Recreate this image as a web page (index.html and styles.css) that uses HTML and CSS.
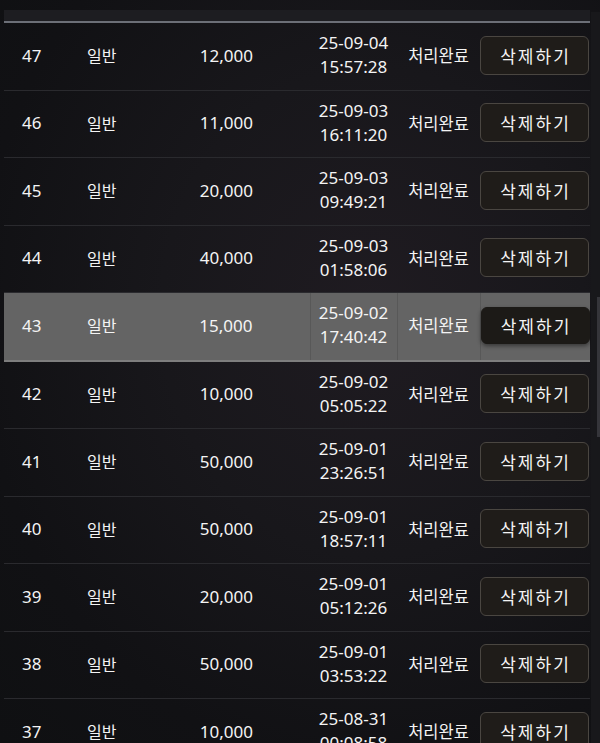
FILE: index.html
```html
<!DOCTYPE html>
<html lang="ko">
<head>
    <meta charset="UTF-8">
    <meta name="viewport" content="width=device-width, initial-scale=1.0">
    <title>충전 내역</title>
    <link rel="stylesheet" href="styles.css">
</head>
<body>

    <div class="page">
        <div class="list">
            <div class="head-bar"></div>
            <table class="history">
                <colgroup>
                    <col class="c-no">
                    <col class="c-type">
                    <col class="c-amount">
                    <col class="c-date">
                    <col class="c-status">
                    <col class="c-action">
                </colgroup>
                <tbody id="rows"></tbody>
            </table>
        </div>
        <div class="scrollbar"><div class="thumb"></div></div>
    </div>

    <script>
        var data = [
            [47, "12,000", "25-09-04", "15:57:28"],
            [46, "11,000", "25-09-03", "16:11:20"],
            [45, "20,000", "25-09-03", "09:49:21"],
            [44, "40,000", "25-09-03", "01:58:06"],
            [43, "15,000", "25-09-02", "17:40:42"],
            [42, "10,000", "25-09-02", "05:05:22"],
            [41, "50,000", "25-09-01", "23:26:51"],
            [40, "50,000", "25-09-01", "18:57:11"],
            [39, "20,000", "25-09-01", "05:12:26"],
            [38, "50,000", "25-09-01", "03:53:22"],
            [37, "10,000", "25-08-31", "00:08:58"]
        ];

        var html = "";
        for (var i = 0; i < data.length; i++) {
            var r = data[i];
            html += '<tr' + (r[0] === 43 ? ' class="active"' : '') + '>';
            html += '<td class="no">' + r[0] + '</td>';
            html += '<td class="type">일반</td>';
            html += '<td class="amount">' + r[1] + '</td>';
            html += '<td class="date">' + r[2] + '<br>' + r[3] + '</td>';
            html += '<td class="status">처리완료</td>';
            html += '<td class="action"><button class="del-btn">삭제하기</button></td>';
            html += '</tr>';
        }
        document.getElementById('rows').innerHTML = html;
    </script>
</body>
</html>
```

FILE: styles.css
```css
html, body {
    height: 100%;
}

body {
    margin: 0;
    overflow: hidden;
    font-family: 'Noto Sans', 'Noto Sans CJK KR', sans-serif;
    color: #f4f4f4;
    background: radial-gradient(ellipse at 62% 42%, #1f1b21 0%, #18171b 40%, #111114 75%, #0f1012 100%);
}

.page {
    display: flex;
    height: 100%;
    padding-top: 10px;
    box-sizing: border-box;
}

.list {
    width: 586px;
    margin-left: 4px;
}

.head-bar {
    height: 11px;
    background-color: #1d1d21;
    border-bottom: 2px solid #6c6f77;
}

.history {
    width: 100%;
    border-collapse: collapse;
    table-layout: fixed;
}

.c-no { width: 66px; }
.c-type { width: 100px; }
.c-amount { width: 140px; }
.c-date { width: 87px; }
.c-status { width: 83px; }
.c-action { width: 110px; }

.history td {
    height: 64.5px;
    padding: 0 0 2px 0;
    border-bottom: 1px solid #2a2a2e;
    vertical-align: middle;
    font-size: 17px;
    white-space: nowrap;
}

.history td.no {
    padding-left: 18px;
}

.history td.type {
    padding-left: 17px;
    font-size: 16px;
}

.history td.amount {
    text-align: right;
    padding-right: 57px;
}

.history td.date {
    text-align: center;
    line-height: 24px;
}

.history td.status {
    text-align: center;
    font-size: 16.5px;
}

.history td.action {
    text-align: right;
    padding-right: 1px;
}

.del-btn {
    width: 109px;
    height: 39px;
    padding: 0 0 0 2px;
    font-family: 'Noto Sans CJK KR', sans-serif;
    font-size: 17px;
    letter-spacing: 2px;
    color: #f4f4f4;
    background-color: #1f1c19;
    border: 1px solid #4a4641;
    border-radius: 6px;
    cursor: pointer;
}

.history tr.active td {
    background-color: #646464;
    border-bottom: 2px solid #7e7e7e;
}

.history tr.active td.date,
.history tr.active td.status,
.history tr.active td.action {
    border-left: 1px solid #585858;
}

.history tr.active .del-btn {
    height: 37px;
    border-color: #1c1a17;
    background-color: #1c1a17;
    box-shadow: 0 2px 4px rgba(0, 0, 0, 0.45);
}

.scrollbar {
    width: 9px;
    margin-left: 1px;
    margin-top: 2px;
    background-color: #18181b;
}

.thumb {
    width: 3px;
    height: 140px;
    margin-top: 285px;
    margin-left: 6px;
    background-color: #35353a;
}
```
